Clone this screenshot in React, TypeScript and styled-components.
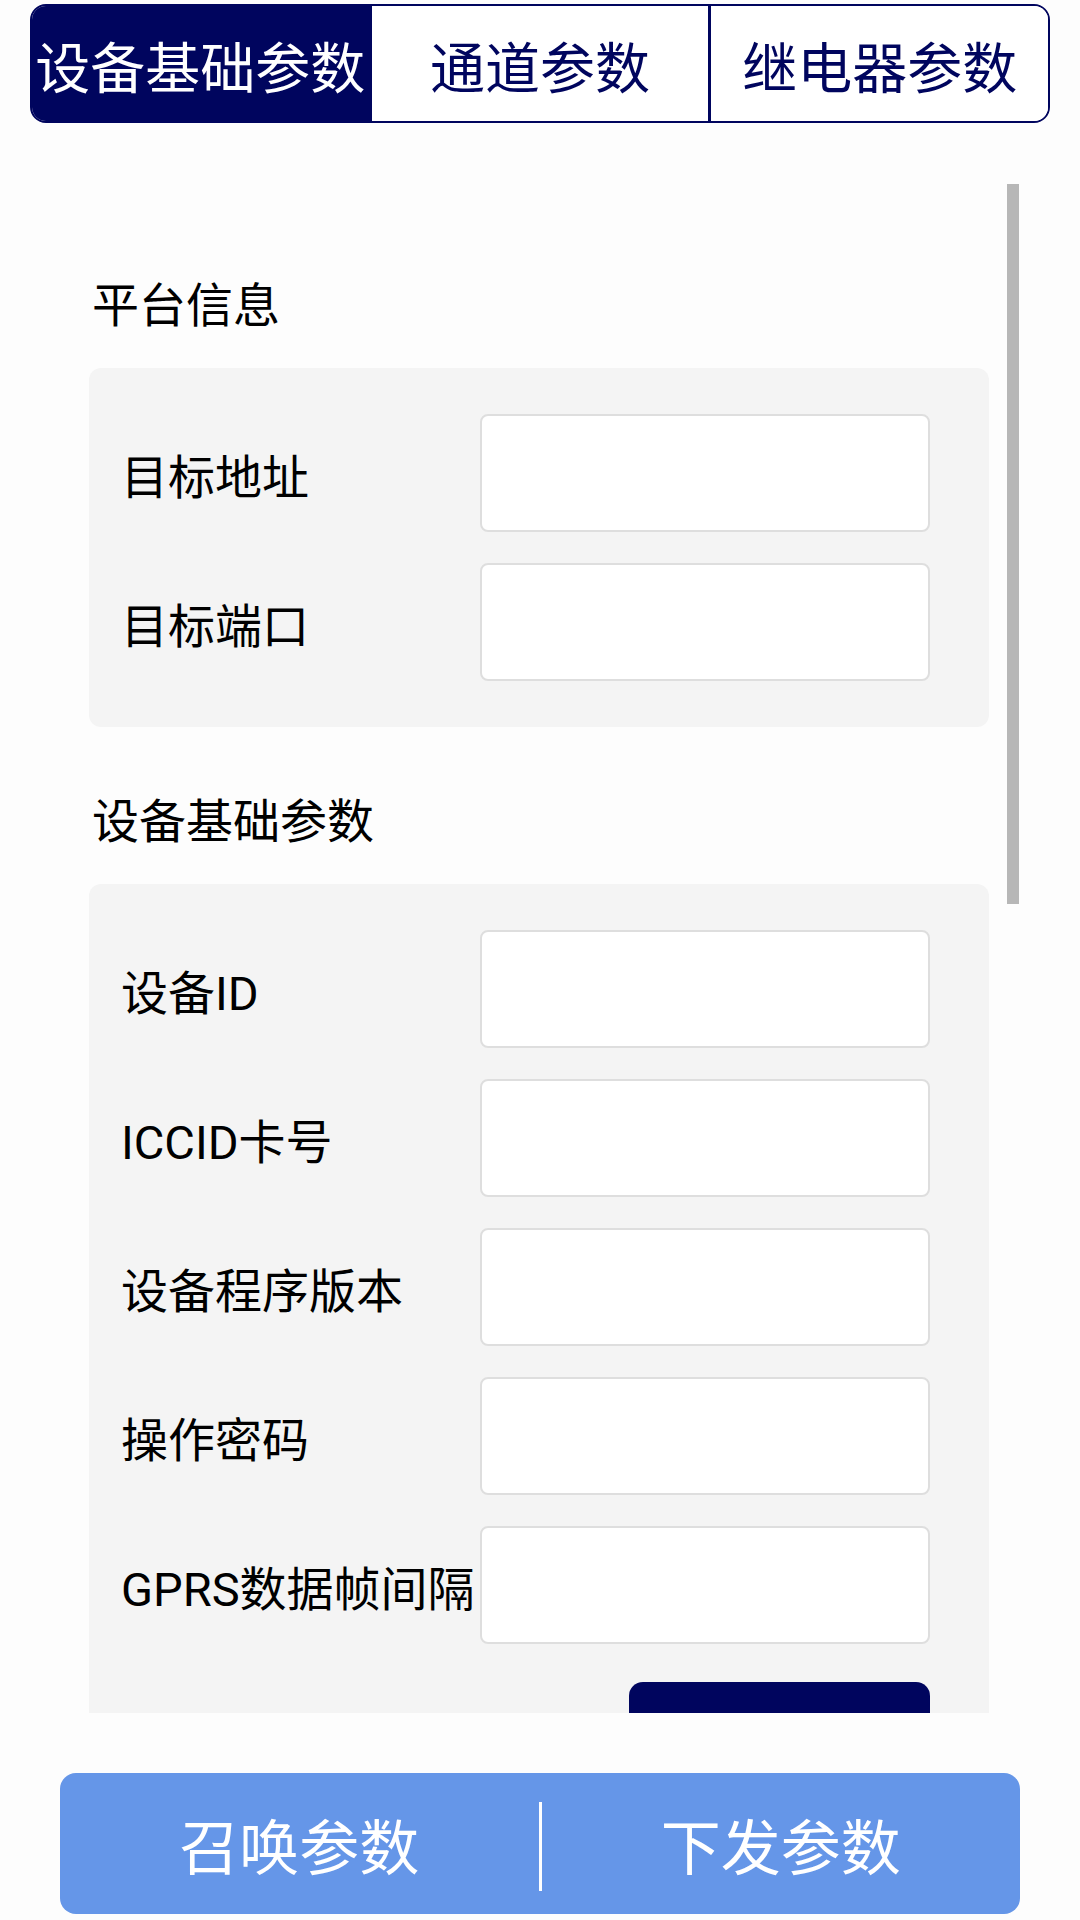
import React, { useLayoutEffect, useRef, useState } from "react";
import styled, { createGlobalStyle } from "styled-components";

const NAVY = "#00055e";
const FONT = `"Roboto", "Noto Sans CJK SC", sans-serif`;

const GlobalStyle = createGlobalStyle`
  html, body {
    margin: 0;
    padding: 0;
    background: #fdfdfd;
  }

  body {
    font-family: ${FONT};
    color: #000;
  }
`;

const Page = styled.div`
  height: 1920px;
  box-sizing: border-box;
  padding: 4px 0 6px;
  display: flex;
  flex-direction: column;
`;

const Tabs = styled.div`
  margin: 0 30px;
  height: 119px;
  flex: 0 0 auto;
  display: flex;
  box-sizing: border-box;
  border: 2px solid ${NAVY};
  border-radius: 16px;
  overflow: hidden;
  background: #fff;
`;

const Tab = styled.div<{ active?: boolean }>`
  flex: 1;
  display: flex;
  align-items: center;
  justify-content: center;
  font-size: 55px;
  white-space: nowrap;
  color: ${({ active }) => (active ? "#fff" : NAVY)};
  background: ${({ active }) => (active ? NAVY : "#fff")};

  & + & {
    border-left: 3px solid ${NAVY};
  }
`;

const ScrollFrame = styled.div`
  position: relative;
  margin: 61px 60px 0;
  height: 1529px;
  flex: 0 0 auto;
`;

const ScrollArea = styled.div`
  height: 100%;
  overflow-y: auto;
  padding: 0 31px 0 29px;
  scrollbar-width: none;

  &::-webkit-scrollbar {
    display: none;
  }
`;

const ScrollThumb = styled.div`
  position: absolute;
  top: 0;
  right: 1px;
  width: 12px;
  background: #b7b7b7;
  pointer-events: none;
`;

const Form = styled.div`
  padding: 89px 0 1583px;
`;

const Section = styled.section`
  & + & {
    margin-top: 62px;
  }
`;

const SectionTitle = styled.h2`
  margin: 0 0 29px;
  padding-left: 3px;
  font-size: 47px;
  line-height: 66px;
  font-weight: 400;
`;

const Card = styled.div`
  background: #f4f4f4;
  border-radius: 12px;
  padding: 46px 59px 46px 32px;
  display: grid;
  grid-template-columns: 359px 1fr;
  row-gap: 31px;
  align-items: center;
`;

const Label = styled.label`
  font-size: 47px;
  white-space: nowrap;
`;

const Field = styled.input`
  height: 118px;
  box-sizing: border-box;
  border: 2px solid #dedede;
  border-radius: 8px;
  background: #fff;
  outline: none;
`;

const SaveButton = styled.button`
  grid-column: 2;
  justify-self: end;
  width: 301px;
  height: 118px;
  margin-top: 7px;
  border: none;
  border-radius: 14px;
  background: ${NAVY};
`;

const ActionBar = styled.div`
  margin: 60px 60px 0;
  height: 141px;
  flex: 0 0 auto;
  display: flex;
  align-items: center;
  border-radius: 16px;
  background: #6596e8;
`;

const ActionButton = styled.button`
  flex: 1;
  height: 100%;
  padding: 0;
  border: none;
  background: transparent;
  color: #fff;
  font-family: ${FONT};
  font-size: 60px;
`;

const ActionDivider = styled.span`
  width: 3px;
  height: 89px;
  margin-top: 5px;
  background: #fff;
`;

const platformFields = ["目标地址", "目标端口"];
const deviceFields = ["设备ID", "ICCID卡号", "设备程序版本", "操作密码", "GPRS数据帧间隔"];

const FieldRows: React.FC<{ names: string[] }> = ({ names }) => (
  <>
    {names.map(name => (
      <React.Fragment key={name}>
        <Label>{name}</Label>
        <Field />
      </React.Fragment>
    ))}
  </>
);

export default function App() {
  const scrollRef = useRef<HTMLDivElement>(null);
  const [thumb, setThumb] = useState({ top: 0, height: 0 });

  const updateThumb = () => {
    const el = scrollRef.current;
    if (!el) return;
    const ratio = el.clientHeight / el.scrollHeight;
    setThumb({ top: el.scrollTop * ratio, height: el.clientHeight * ratio });
  };

  useLayoutEffect(updateThumb, []);

  return (
    <>
      <GlobalStyle />
      <Page>
        <Tabs>
          <Tab active>设备基础参数</Tab>
          <Tab>通道参数</Tab>
          <Tab>继电器参数</Tab>
        </Tabs>

        <ScrollFrame>
          <ScrollArea ref={scrollRef} onScroll={updateThumb}>
            <Form>
              <Section>
                <SectionTitle>平台信息</SectionTitle>
                <Card>
                  <FieldRows names={platformFields} />
                </Card>
              </Section>

              <Section>
                <SectionTitle>设备基础参数</SectionTitle>
                <Card>
                  <FieldRows names={deviceFields} />
                  <SaveButton aria-label="设置" />
                </Card>
              </Section>
            </Form>
          </ScrollArea>
          <ScrollThumb style={{ top: thumb.top, height: thumb.height }} />
        </ScrollFrame>

        <ActionBar>
          <ActionButton>召唤参数</ActionButton>
          <ActionDivider />
          <ActionButton>下发参数</ActionButton>
        </ActionBar>
      </Page>
    </>
  );
}
